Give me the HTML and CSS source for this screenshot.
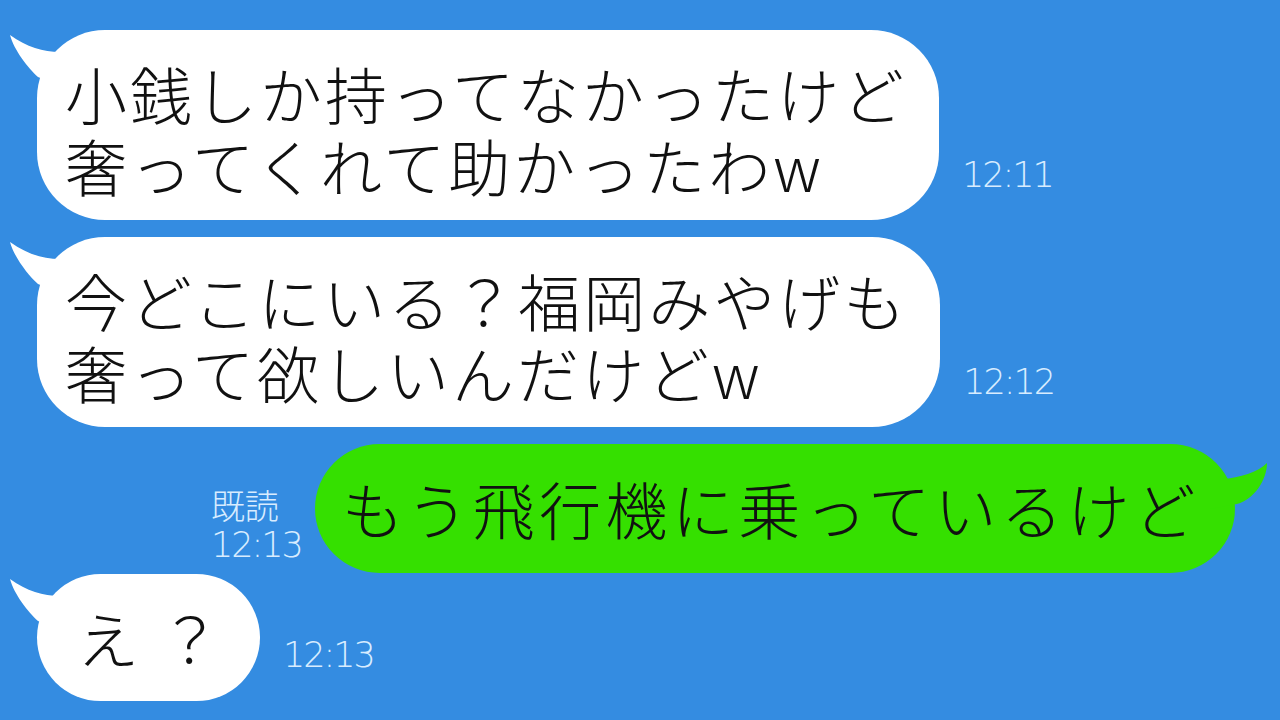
FILE: index.html
```html
<!DOCTYPE html>
<html lang="ja">
  <head>
    <meta charset="utf-8" />
    <title>chat</title>
    <link rel="stylesheet" href="styles.css">
  </head>
  <body>
    <main class="chat">
      <div class="row">
        <div class="bubble in">
          <svg class="tail" width="60" height="60" viewBox="0 0 60 60"><path d="M0,5 C4,20 18,38 28,47 L60,60 L60,22 L50,22 C33,22 17,17 0,5 Z"/></svg>
          <p>小銭しか持ってなかったけど<br>奢ってくれて助かったわw</p>
        </div>
        <span class="time">12:11</span>
      </div>

      <div class="row">
        <div class="bubble in">
          <svg class="tail" width="60" height="60" viewBox="0 0 60 60"><path d="M0,5 C4,20 18,38 28,47 L60,60 L60,22 L50,22 C33,22 17,17 0,5 Z"/></svg>
          <p>今どこにいる？福岡みやげも<br>奢って欲しいんだけどw</p>
        </div>
        <span class="time">12:12</span>
      </div>

      <div class="row out">
        <div class="meta">
          <span>既読</span>
          <span>12:13</span>
        </div>
        <div class="bubble mine">
          <svg class="tail" width="60" height="60" viewBox="0 0 60 60"><path d="M57,9 C57,25 45,45 27,50 L0,55 L0,25 L12,25 C30,24 48,18 57,9 Z"/></svg>
          <p>もう飛行機に乗っているけど</p>
        </div>
      </div>

      <div class="row tight">
        <div class="bubble in short">
          <svg class="tail" width="60" height="60" viewBox="0 0 60 60"><path d="M0,5 C4,20 18,38 28,47 L60,60 L60,22 L50,22 C33,22 17,17 0,5 Z"/></svg>
          <p>え？</p>
        </div>
        <span class="time">12:13</span>
      </div>
    </main>
  </body>
</html>
```

FILE: styles.css
```css
html { font-family: "Noto Sans CJK JP", sans-serif; }

body {
  margin: 0;
  background-color: #348ce1;
  width: 1280px;
  height: 720px;
  overflow: hidden;
}

.chat {
  display: flex;
  flex-direction: column;
  gap: 17px;
  padding: 30px 45px 0 37px;
}

.row {
  display: flex;
  align-items: flex-end;
  gap: 23px;
}
.row.out {
  justify-content: flex-end;
  gap: 13px;
}
.row.tight {
  margin-top: -16px;
}

.bubble {
  position: relative;
  background-color: #fff;
  border-radius: 68px;
  padding: 27px 32px 19px 28px;
}
.bubble p {
  margin: 0;
  color: #111;
  font-size: 62px;
  font-weight: 300;
  line-height: 72px;
  letter-spacing: 3px;
  white-space: nowrap;
}
.bubble .tail {
  position: absolute;
  top: 0;
  left: -27px;
  fill: #fff;
}

.bubble.short {
  border-radius: 64px;
  padding: 27px 19px 28px 40px;
}
.bubble.short p {
  letter-spacing: 20px;
}

.bubble.mine {
  background-color: #35e000;
  border-radius: 65px;
  padding: 28px 35px 29px 27px;
}
.bubble.mine p {
  letter-spacing: 4.4px;
}
.bubble.mine .tail {
  left: auto;
  right: -35px;
  top: 10px;
  fill: #35e000;
}

.time, .meta {
  color: #d8ecff;
  font-family: "DejaVu Sans", sans-serif;
  font-weight: 200;
  font-size: 35px;
  line-height: 40px;
  letter-spacing: -2px;
}
.time {
  margin-bottom: 25px;
}
.row.tight .time {
  margin-bottom: 26px;
}

.meta {
  display: flex;
  flex-direction: column;
  margin-bottom: 8px;
}
.meta span:first-child {
  font-family: "Noto Sans CJK JP", sans-serif;
  font-size: 34px;
  letter-spacing: 0;
}
```
